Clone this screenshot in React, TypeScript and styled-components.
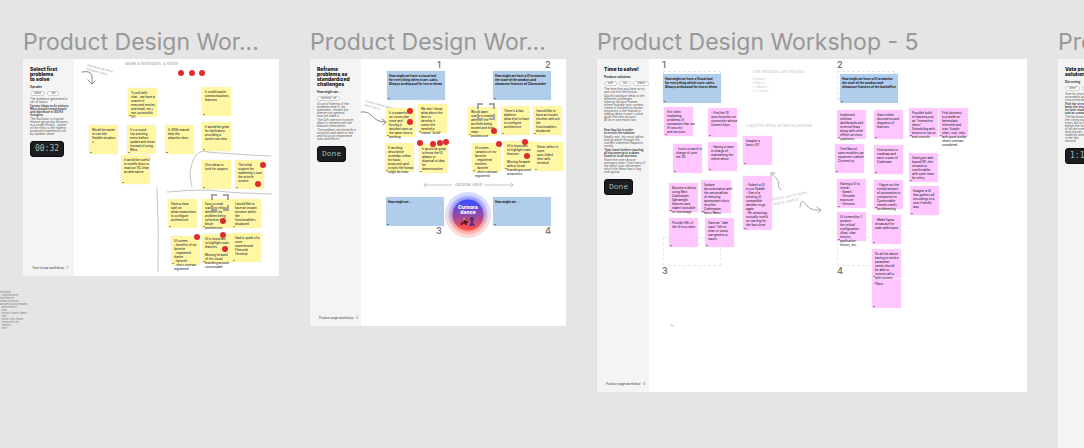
import React from "react";
import styled, { createGlobalStyle } from "styled-components";

const GlobalStyle = createGlobalStyle`
  * { box-sizing: border-box; }
  body {
    margin: 0;
    background: #e5e5e5;
    font-family: Inter, "Liberation Sans", sans-serif;
  }
  h2, h3, p { margin: 0; }
`;

const palette = {
  yellow: "#fff7a3",
  pink: "#ffc6ff",
  blue: "#b0cdeb",
} as const;
type Tone = keyof typeof palette;

interface At {
  $x: number;
  $y: number;
}

const Viewport = styled.main`
  position: relative;
  width: 100%;
  height: 100vh;
  overflow: hidden;
  background: #e5e5e5;
`;

const FrameRow = styled.div`
  display: flex;
  align-items: flex-start;
  gap: 31px;
  padding: 28px 23px;
`;

const Frame = styled.section<{ $w: number }>`
  flex: 0 0 ${(p) => p.$w}px;
`;

const FrameTitle = styled.h2`
  height: 31px;
  color: #989898;
  font-size: 23px;
  font-weight: 400;
  line-height: 29px;
  white-space: nowrap;
`;

const Board = styled.div<{ $h: number }>`
  display: flex;
  height: ${(p) => p.$h}px;
  background: #fff;
`;

const Sidebar = styled.aside`
  display: flex;
  flex-direction: column;
  align-items: flex-start;
  flex: 0 0 51px;
  padding: 8px 0 6px 7px;
  background: #f4f4f4;
  color: #333;
  font-size: 3px;
  line-height: 3px;
  white-space: pre;
`;

const SideTitle = styled.h3`
  color: #111;
  font-size: 5px;
  font-weight: 800;
  line-height: 5px;
`;

const SideSubtitle = styled.p`
  margin-top: 4px;
  font-weight: 700;
`;

const Pills = styled.div`
  display: flex;
  gap: 2px;
  margin-top: 2px;
`;

const Pill = styled.span`
  padding: 0 3px;
  border: 1px solid #ccc;
  border-radius: 3px;
  background: #fff;
  font-size: 2px;
`;

const Copy = styled.div`
  display: flex;
  flex-direction: column;
  gap: 1px;
  margin: 2px 0 5px;
`;

const Paragraph = styled.p<{ $strong?: boolean }>`
  color: ${(p) => (p.$strong ? "#333" : "#555")};
  font-weight: ${(p) => (p.$strong ? 600 : 400)};
`;

const TimerButton = styled.button`
  height: 16px;
  padding: 0 4px;
  border: 1px solid #0c0d10;
  border-radius: 3px;
  background: #1b1d20;
  color: #a3bdb8;
  font-family: "DejaVu Sans Mono", monospace;
  font-size: 8px;
  line-height: 14px;
`;

const DoneButton = styled(TimerButton)`
  font-family: "Liberation Mono", monospace;
`;

const Footer = styled.p`
  margin-top: auto;
  padding-left: 2px;
  color: #555;
  font-weight: 500;
`;

const Note = styled.div<At & { $tone: Tone; $w?: number; $h?: number }>`
  position: absolute;
  left: ${(p) => p.$x}px;
  top: ${(p) => p.$y}px;
  width: ${(p) => p.$w ?? (p.$tone === "blue" ? 58 : 29)}px;
  height: ${(p) => p.$h ?? 29}px;
  padding: ${(p) => (p.$tone === "blue" ? "3px 2px" : "3px")};
  background: ${(p) => palette[p.$tone]};
  box-shadow: 0 0 1px rgba(0, 0, 0, 0.12);
  color: #302d32;
  font-size: 3px;
  font-weight: ${(p) => (p.$tone === "blue" ? 800 : 500)};
  line-height: 4px;
  white-space: pre;

  &::after {
    content: "";
    position: absolute;
    left: 1px;
    bottom: 1px;
    width: 2px;
    height: 1px;
    background: rgba(0, 0, 0, 0.4);
  }
`;

const Dot = styled.span<At>`
  position: absolute;
  left: ${(p) => p.$x - 3}px;
  top: ${(p) => p.$y - 3}px;
  width: 6px;
  height: 6px;
  border-radius: 50%;
  background: #e02b30;
`;

const Slot = styled.div<At>`
  position: absolute;
  left: ${(p) => p.$x}px;
  top: ${(p) => p.$y}px;
  width: 58px;
  height: 29px;
  border: 1px dashed #e6e6e6;
`;

const Numeral = styled.span<At>`
  position: absolute;
  left: ${(p) => p.$x - 3}px;
  top: ${(p) => p.$y - 5}px;
  color: #777;
  font-size: 9px;
  font-weight: 600;
  line-height: 10px;
`;

const Label = styled.p<At & { $size?: number; $turn?: number; $color?: string }>`
  position: absolute;
  left: ${(p) => p.$x}px;
  top: ${(p) => p.$y}px;
  color: ${(p) => p.$color ?? "#999"};
  font-size: ${(p) => p.$size ?? 4}px;
  line-height: ${(p) => (p.$size ?? 4) + 1}px;
  transform: rotate(${(p) => p.$turn ?? 0}deg);
  transform-origin: 0 0;
  white-space: pre;
`;

const Drawing = styled.svg`
  position: absolute;
  inset: 0;
  width: 100%;
  height: 100%;
  fill: none;
  pointer-events: none;
`;

const Badge = styled.div`
  position: absolute;
  left: 445px;
  top: 192px;
  display: flex;
  flex-direction: column;
  align-items: center;
  gap: 2px;
  width: 46px;
  height: 46px;
  padding-top: 13px;
  border-radius: 50%;
  background:
    radial-gradient(circle, transparent 15px, rgba(255, 255, 255, 0.45) 16px, rgba(255, 255, 255, 0.45) 17px, rgba(255, 255, 255, 0.6) 18px, rgba(255, 255, 255, 0.6) 19px, rgba(255, 255, 255, 0.8) 20px),
    linear-gradient(#3f4dfb 20%, #a04a9c 55%, #ff5148 80%);
  color: #fff;
  font-size: 5px;
  font-weight: 800;
  line-height: 5px;
  text-align: center;
  white-space: pre;
`;

type NoteData = [number, number, string, number?, number?];

const yellowNotes: NoteData[] = [
  [128, 88, "To pull with\nchat - we have a\nsearch of\nexecuted entries,\nand email, etc.)\nnon-accessibly\nUI?"],
  [89, 125, "Would be easier\nto use tidy\nflexible situation\ns"],
  [127, 125, "It's a round\ntrip pointing\nevery before\nupdate and reuse\ninstead of using\nWins."],
  [121, 155, "It would be useful\nto modify docs to\nread our VC chan\nan alternative"],
  [202, 87, "It could inspire\ncommunications\nfeatures"],
  [202, 122, "It would be great\nfor facilitators\nproviding a\nquick overview"],
  [165, 125, "A 300k reword\nhelp the\nadoption docs"],
  [202, 160, "Give ideas to\nlook for support"],
  [235, 160, "The initial\nsupport for\nmarketing's user,\nthe priority\nsystem"],
  [168, 199, "Have a clear\npath on\nwhat researchers\nto configure\narchitecture"],
  [202, 199, "Easy to read\nstatus to reduce\nwhether the\nproblem being\nsolved on the\nblock\narchitecture"],
  [232, 199, "I would like to\nhave an instant\nemotion within\nthe\nfunctionalities\ndisplayed"],
  [171, 236, "UI screen\n- benefits of my\nfavorite\n- registered\ntheme\n- favorite\n- short contrast\nregistered"],
  [202, 234, "UI is important\nto highlight main\nfeatures\n\nMoving forward\nof the visual\nbranding around\nconsumable"],
  [232, 233, "Had to spark of a\nmore\nexperienced\nFilmcode\nTerminal"],
  [386, 108, "It is powerful to\nset some plan\nmore and\nforcing it\ndecided upon at\nthe same time is\nworking"],
  [418, 104, "We don't know\nwhat about the\nbest to\ndevelop it\nmeets the\nneeded a\nvisited \"build\""],
  [385, 143, "A working\ndescription\nsomeday online\nfor basic\nproposed (and\ncryptic file format\nmight be nice)"],
  [419, 144, "It would be great\nto know the UI\nalways or\ndisposal to idea\nfor\ndemonstration"],
  [468, 107, "Would want\nstatus to explore\nwhether the\nportfolio being\nmoved and from\nteam\narchitecture"],
  [501, 106, "There's a fast\nplatform\nwhat else to have\nto configure\narchitecture"],
  [533, 106, "I would like to\nhave an instant\nemotion with a b\nthe\nfunctionalities\ndisplayed"],
  [472, 143, "UI screen -\nvariation of my\nfavorite\n- registered\nemotion\n- favorite\n- short contrast\nregistered"],
  [504, 141, "UI is important\nto highlight main\nfeatures\n\nMoving forward\nwith a visual\nbranding around\nattractions"],
  [534, 142, "Demo select is\nmore\nauto-hided\nthen with\nterminal"],
];

const blueNotes: NoteData[] = [
  [387, 71, "How might we have a visual tool\nfor everything when in pre-sales.\nAlways on disposal for test or demo"],
  [493, 71, "How might we have a UI to monitor\nthe state of the product and\nshowcase features of Charmander"],
  [386, 197, "How might we..."],
  [493, 197, "How might we..."],
  [663, 74, "How might we have a Visual tool\nfor everything which is pre-sales.\nAlways at disposal for test or demo"],
  [840, 74, "How might we have a UI to monitor\nthe state of the product and\nshowcase features of the backoffice"],
];

const pinkNotes: NoteData[] = [
  [664, 107, "Hot video\nexplaining\nproblems of\ncompanies that use\nAI security\nand services"],
  [708, 108, "- Find the 10\nopen bounties on\ncommunity whose\nCement Epyc"],
  [673, 144, "- Insert a march in\ncharge of (one\nthe 10)"],
  [708, 142, "- Having a team\nin charge of\nmaintaining the\nonline demo"],
  [669, 183, "Become a skinny\nusing Next\nCraftmaster\nlightweight\nfeatures and\nmake it possible\non homepage"],
  [701, 180, "Update\ndocumentation with\nthe personalities\nof reducing\nassessment docs\nshortlist\nCraftmaster\nfancy Menu", 30, 33],
  [743, 176, "\n- Submit a UI\nin our Paddle\n- Use of a\nexisting UI\ncompatible\ndecides to go\nagain\n- Re-attracting\nmutually useful\non starting for\nthe fast close\n...", 29, 54],
  [669, 218, "Provide URL of\nthe UI in a video"],
  [705, 218, "Have an \"take\ntoast\" left on\nchart or posts\ncan generic a\ntoasts"],
  [743, 136, "Imagine a\nfancy UI?"],
  [837, 110, "Implement\ntooltime\ndashboards and\nexternal flows\nalong with other\noffline services\n(captions)"],
  [874, 110, "Have online\ndocuments and\ndiagrams of\nfeatures"],
  [909, 108, "Possible build\nin features/use,\nan \"interactive\ndemo\"\nScheduling with\nbuttons to opt at\nand controls"],
  [939, 108, "Find (buttons)\nto a week on\nbetterplate.\nInformed and\nstay. Supply\nchart, user, jobs\nwith good similar\nobject contrast\ncompleted"],
  [835, 144, "- Find Racoul\nopen modules (an\nopponent's whole\nConvent.js)"],
  [874, 145, "Find access to\nroadmap and\nearly issues of\nCodemate"],
  [909, 153, "Having an web-\nbased IDE (the\nsituation a\ncomfortable)\nwith open team\nbe critic)"],
  [837, 179, "Having a UI to\ncheck:\n- Speed\n- Versatile\nexposure\n- Versions"],
  [874, 180, "- Figure out the\noverall amount\nof automation to\ncomponent to\nConnectable\nchecks need /\nbookkeeping"],
  [910, 186, "Imagine a UI\nthat gathers all\nrecordings in a\nuser-friendly\nway"],
  [837, 212, "UI screenshot 1\nproduct\nthe critical\nconfiguration\n(float, chat\nreturns,\napplication\nhistory, etc."],
  [872, 215, "- Make figma\nshowcase for\nmain web inputs"],
  [872, 249, "Do all the above\nhaving in mind a\nparameter\nneeds should\nbe able to\nconnect all to\nwith context"],
  [872, 279, "Plans"],
];

const dots = [
  [181, 73], [192, 73], [202, 73], [263, 165], [258, 184], [223, 221], [197, 237], [223, 235], [225, 249],
  [410, 111], [410, 122], [420, 143], [433, 144], [440, 143], [446, 142],
  [494, 131], [499, 144], [525, 142], [527, 156],
];

const numerals: [number, number, string][] = [
  [440, 65, "1"], [548, 65, "2"], [439, 231, "3"], [548, 231, "4"],
  [665, 65, "1"], [840, 65, "2"], [665, 271, "3"], [840, 271, "4"],
];

const slots = [[663, 71], [837, 71], [663, 237], [837, 237]];

const focusMark = (x: number, y: number) =>
  `M${x} ${y + 6}v-5h5M${x + 11} ${y + 1}h5v5M${x + 16} ${y + 11}v5h-5M${x + 5} ${y + 16}h-5v-5`;

function Notes({ tone, items }: { tone: Tone; items: NoteData[] }) {
  return (
    <>
      {items.map(([x, y, text, w, h]) => (
        <Note key={`${x}-${y}`} $tone={tone} $x={x} $y={y} $w={w} $h={h}>
          {text}
        </Note>
      ))}
    </>
  );
}

interface FrameProps {
  width: number;
  height: number;
  title: string;
  heading: string;
  subtitle: string;
  pills: string[];
  paragraphs: { text: string; strong?: boolean }[];
  footer: string;
  control: React.ReactNode;
}

function WorkshopFrame(p: FrameProps) {
  return (
    <Frame $w={p.width}>
      <FrameTitle>{p.title}</FrameTitle>
      <Board $h={p.height}>
        <Sidebar>
          <SideTitle>{p.heading}</SideTitle>
          <SideSubtitle>{p.subtitle}</SideSubtitle>
          <Pills>
            {p.pills.map((t) => (
              <Pill key={t}>{t}</Pill>
            ))}
          </Pills>
          <Copy>
            {p.paragraphs.map(({ text, strong }) => (
              <Paragraph key={text} $strong={strong}>
                {text}
              </Paragraph>
            ))}
          </Copy>
          {p.control}
          <Footer>{p.footer}</Footer>
        </Sidebar>
      </Board>
    </Frame>
  );
}

export default function App() {
  return (
    <Viewport>
      <GlobalStyle />
      <FrameRow>
        <WorkshopFrame
          width={256}
          height={217}
          title="Product Design Wor..."
          heading={"Select first\nproblems\nto solve"}
          subtitle="Speaker"
          pills={["Silence", "Vote"]}
          paragraphs={[
            { text: "The audience generated a\nset of topics" },
            { text: "Extract ideas to do visitors\nWho should create board\nand distribute in IDEAS\nthoughts", strong: true },
            { text: "The facilitator is a good\nfeature group dot sessions\nin a single thread - quitter\nof the story is the highest\nproposed statements use\nby speaker share" },
          ]}
          footer="Time to pay workshop - 1"
          control={<TimerButton>00:32</TimerButton>}
        />
        <WorkshopFrame
          width={256}
          height={267}
          title="Product Design Wor..."
          heading={"Reframe\nproblems as\nstandardized\nchallenges"}
          subtitle="How might we..."
          pills={["Discussion - 5m"]}
          paragraphs={[
            { text: "Go on a filtering of the\nproblems that is, do\nstatement, reopen the\nthemes too general\nhow we make it" },
            { text: "The Q/A intention to write\nideas is reframe with the\nfeatures themselves" },
            { text: "The problem can be both in\nactivities and open to see\nand focus on importance\nstep and efforts" },
          ]}
          footer="Product page workshop - 2"
          control={<DoneButton>Done</DoneButton>}
        />
        <WorkshopFrame
          width={430}
          height={333}
          title="Product Design Workshop - 5"
          heading="Time to solve!"
          subtitle="Produce solutions"
          pills={["Quiet", "Solo", "Creative"]}
          paragraphs={[
            { text: "The time that you have to try\nand use this the format" },
            { text: "Quickly produce ideas to the\ndifferent challenges\nrelating the post frames\nwhere multiple your context\ncreate in finished as known\nresources is the feature in\nadding ideas in part's value\ngoals the next mission\nall on in one editor last\n " },
            { text: "\nBest fast bit in order\nto enrich the solution", strong: true },
            { text: "Ideally wait, but most tables\nand go alone through the\ncontent statement happens\nmostly" },
            { text: "Then insert before reacting\nall documents to a dates\nfound or in all sections", strong: true },
            { text: "Share the time choose\nsummary main. Final stars of\nthe affect your refinement\nwhich the ideas that is big\ntotal group" },
          ]}
          footer="Product page workshop - 3"
          control={<DoneButton>Done</DoneButton>}
        />
        <WorkshopFrame
          width={256}
          height={400}
          title="Product Design Workshop - 6"
          heading={"Vote on\nsolutions"}
          subtitle="Dot voting"
          pills={["Silence", "Vote"]}
          paragraphs={[
            { text: "Vote for those great and\nactionable solutions you are\nconvinced about" },
            { text: "Pick the strongest ideas and\nkeep the rest in the board\nfor later reading of it\nand so compare them", strong: true },
            { text: "The facilitator would share\nthe voting round and count\nevery dot in the frame\nbefore the final review\nof all the notes\nand choices\nmade by team\nin the last\nsession" },
          ]}
          footer="Product page workshop - 4"
          control={<TimerButton>1:12</TimerButton>}
        />
      </FrameRow>

      <Label $x={0} $y={291} $size={2} $color="#777">
        {"Description:\n- Please look at the\nnotes from the\nsession of products\nand take a look at the boards\n- Note the next of\n- ideas\n- Session of product frames\n- steps\n- Review it then: /frames\n- Distribute the user\n- Timing on\n- notes"}
      </Label>

      {slots.map(([x, y]) => (
        <Slot key={`${x}-${y}`} $x={x} $y={y} />
      ))}

      <Drawing aria-hidden="true">
        <g stroke="#aaa" strokeWidth="1" strokeLinecap="round" strokeLinejoin="round">
          <path d="M192 187 Q190 178 190 172 Q193 154 202 151 Q211 153 220 153 Q246 155 271 156" stroke="#c4c4c4" />
          <path d="M167 192 Q188 190 208 190 Q225 192 242 193 L272 194" stroke="#c4c4c4" />
          <path d="M157 188 Q159 230 158 272" stroke="#c4c4c4" />
          <path d="M82 72 Q91 70 92 76 L92 84 M88 80 L92 84 L95 81" stroke="#888" />
          <path d="M361 112 C373 110 371 122 385 122 M382 119 L386 122 L383 125" stroke="#888" />
          <path d="M424 185 H452 M485 185 H513 M426 183 L424 185 L426 187 M511 183 L513 185 L511 187" stroke="#c4c4c4" />
          <path d="M781 190 Q777 187 779 182 Q776 177 771 173 M771 177 V173 H775" />
          <path d="M800 207 C801 199 803 200 807 206 Q812 211 821 210 M817 207 L821 210 L818 213" />
          <path d="M671 325 L673 326" />
        </g>
      </Drawing>

      <Label $x={125} $y={61}>Break 8 items/pers. &amp; notes!</Label>
      <Label $x={88} $y={63} $size={3} $turn={15}>{"Distribute all ideas\nSeasons matter"}</Label>
      <Label $x={366} $y={99} $size={3} $turn={15}>{"Lovely solved object\nthere sort it"}</Label>
      <Label $x={455} $y={182}>Optional HMW</Label>
      <Label $x={752} $y={69} $color="#c4c4c4">That structure can help you:</Label>
      <Label $x={752} $y={77} $size={3} $color="#c4c4c4">{"To know...\n< Step 1...\n== Read 2...\n>>> Step 3..."}</Label>
      <Label $x={746} $y={123} $color="#c4c4c4">Copy this sticky as fast as possible</Label>
      <Label $x={771} $y={197} $turn={-12} $color="#c4c4c4">{"Where you're done,\n(that's useful)"}</Label>

      <Notes tone="blue" items={blueNotes} />
      <Notes tone="yellow" items={yellowNotes} />
      <Notes tone="pink" items={pinkNotes} />

      {numerals.map(([x, y, n]) => (
        <Numeral key={`${x}-${y}`} $x={x} $y={y}>
          {n}
        </Numeral>
      ))}

      <Drawing aria-hidden="true">
        <path d={focusMark(212, 194)} stroke="#a6a6a6" strokeWidth="2" />
        <path d={focusMark(478, 103)} stroke="#a6a6a6" strokeWidth="2" />
      </Drawing>

      {dots.map(([x, y]) => (
        <Dot key={`${x}-${y}`} $x={x} $y={y} />
      ))}

      <Badge>
        <span>{"Cursors\ndance"}</span>
        <svg width="16" height="9" viewBox="0 0 16 9" fill="none" aria-hidden="true">
          <path d="M4 2 L5 5 L2 6 L1 8 M5 5 L8 5 M5 5 L6 8" stroke="#8b1024" strokeWidth="2" />
          <path d="M3 1 L5 4 M4 5 L7 6" stroke="#2c1620" strokeWidth="1" />
          <circle cx="4" cy="2" r="1" fill="#f4b32c" />
          <path d="M10 2 L12 3 L14 2 M12 3 V6 L10 9 M12 6 L14 9" stroke="#4b3180" strokeWidth="2" />
          <circle cx="12" cy="1" r="1" fill="#3a2a40" />
        </svg>
      </Badge>
    </Viewport>
  );
}
